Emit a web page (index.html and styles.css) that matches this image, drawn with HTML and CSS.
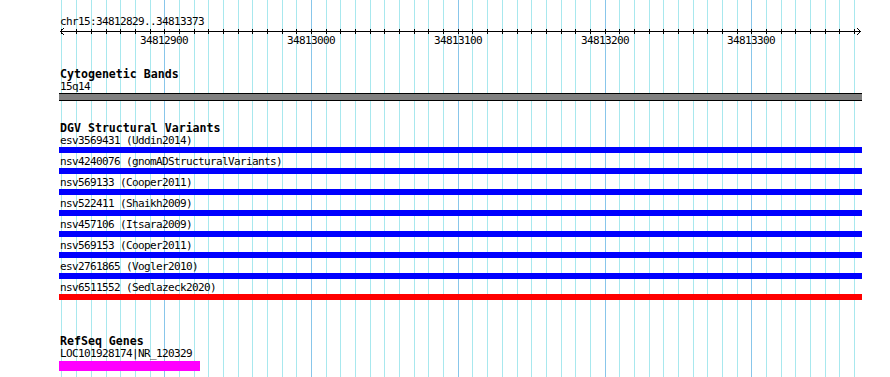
FILE: index.html
```html
<!DOCTYPE html>
<html lang="en">
<head>
<meta charset="utf-8">
<title>chr15:34812829..34813373</title>
<link rel="stylesheet" href="styles.css">
</head>
<body>
<div class="page">
  <svg class="grid" width="890" height="377" viewBox="0 0 890 377" aria-hidden="true">
    <path class="grid-minor" d="M61.5 0V377M76.5 0V377M91.5 0V377M106.5 0V377M120.5 0V377M135.5 0V377M150.5 0V377M179.5 0V377M194.5 0V377M208.5 0V377M223.5 0V377M238.5 0V377M252.5 0V377M267.5 0V377M282.5 0V377M296.5 0V377M326.5 0V377M340.5 0V377M355.5 0V377M370.5 0V377M384.5 0V377M399.5 0V377M414.5 0V377M428.5 0V377M443.5 0V377M472.5 0V377M487.5 0V377M502.5 0V377M517.5 0V377M531.5 0V377M546.5 0V377M561.5 0V377M575.5 0V377M590.5 0V377M619.5 0V377M634.5 0V377M649.5 0V377M663.5 0V377M678.5 0V377M693.5 0V377M707.5 0V377M722.5 0V377M737.5 0V377M766.5 0V377M781.5 0V377M795.5 0V377M810.5 0V377M825.5 0V377M839.5 0V377M854.5 0V377"/>
    <path class="grid-major" d="M164.5 0V377M311.5 0V377M458.5 0V377M605.5 0V377M751.5 0V377"/>
  </svg>
  <div class="content">
    <svg class="ruler" width="890" height="60" viewBox="0 0 890 60">
      <text class="ruler-label" x="60" y="25">chr15:34812829..34813373</text>
      <path class="axis" d="M60 31.5H860M64 28L60.5 31.5L64 35M857 28L860.5 31.5L857 35"/>
      <path class="axis" d="M61.5 29v5M76.5 29v5M91.5 29v5M106.5 29v5M120.5 29v5M135.5 29v5M150.5 29v5M164.5 29v5M179.5 29v5M194.5 29v5M208.5 29v5M223.5 29v5M238.5 29v5M252.5 29v5M267.5 29v5M282.5 29v5M296.5 29v5M311.5 29v5M326.5 29v5M340.5 29v5M355.5 29v5M370.5 29v5M384.5 29v5M399.5 29v5M414.5 29v5M428.5 29v5M443.5 29v5M458.5 29v5M472.5 29v5M487.5 29v5M502.5 29v5M517.5 29v5M531.5 29v5M546.5 29v5M561.5 29v5M575.5 29v5M590.5 29v5M605.5 29v5M619.5 29v5M634.5 29v5M649.5 29v5M663.5 29v5M678.5 29v5M693.5 29v5M707.5 29v5M722.5 29v5M737.5 29v5M751.5 29v5M766.5 29v5M781.5 29v5M795.5 29v5M810.5 29v5M825.5 29v5M839.5 29v5M854.5 29v5"/>
      <text class="ruler-num" x="164" y="44">34812900</text>
      <text class="ruler-num" x="311" y="44">34813000</text>
      <text class="ruler-num" x="458" y="44">34813100</text>
      <text class="ruler-num" x="605" y="44">34813200</text>
      <text class="ruler-num" x="751" y="44">34813300</text>
    </svg>

    <section class="track track-cyto">
      <h2 class="track-title">Cytogenetic Bands</h2>
      <div class="label label-tight">15q14</div>
      <div class="band"></div>
    </section>

    <section class="track track-dgv">
      <h2 class="track-title">DGV Structural Variants</h2>
      <div class="features">
        <div class="feature"><div class="label">esv3569431 (Uddin2014)</div><div class="bar bar-blue"></div></div>
        <div class="feature"><div class="label">nsv4240076 (gnomADStructuralVariants)</div><div class="bar bar-blue"></div></div>
        <div class="feature"><div class="label">nsv569133 (Cooper2011)</div><div class="bar bar-blue"></div></div>
        <div class="feature"><div class="label">nsv522411 (Shaikh2009)</div><div class="bar bar-blue"></div></div>
        <div class="feature"><div class="label">nsv457106 (Itsara2009)</div><div class="bar bar-blue"></div></div>
        <div class="feature"><div class="label">nsv569153 (Cooper2011)</div><div class="bar bar-blue"></div></div>
        <div class="feature"><div class="label">esv2761865 (Vogler2010)</div><div class="bar bar-blue"></div></div>
        <div class="feature"><div class="label">nsv6511552 (Sedlazeck2020)</div><div class="bar bar-red"></div></div>
      </div>
    </section>

    <section class="track track-refseq">
      <h2 class="track-title">RefSeq Genes</h2>
      <div class="label label-tight">LOC101928174|NR_120329</div>
      <div class="gene"></div>
    </section>
  </div>
</div>
</body>
</html>
```
FILE: styles.css
```css
html, body {
  margin: 0;
  padding: 0;
  background: #ffffff;
}

.page {
  position: relative;
  width: 890px;
  height: 377px;
  overflow: hidden;
  background: #ffffff;
}

.grid {
  position: absolute;
  left: 0;
  top: 0;
  z-index: 0;
}

.grid-minor {
  stroke: #a8e8ee;
  stroke-width: 1;
  fill: none;
  shape-rendering: crispEdges;
}

.grid-major {
  stroke: #88c6ea;
  stroke-width: 1;
  fill: none;
  shape-rendering: crispEdges;
}

.content {
  position: relative;
  z-index: 1;
  display: flex;
  flex-direction: column;
}

.ruler {
  display: block;
}

.axis {
  stroke: #000000;
  stroke-width: 1;
  fill: none;
  shape-rendering: crispEdges;
}

.ruler-label,
.ruler-num {
  font-family: "DejaVu Sans Mono", monospace;
  font-size: 11px;
  letter-spacing: -0.62px;
  fill: #000000;
}

.ruler-num {
  text-anchor: middle;
}

.track {
  display: flex;
  flex-direction: column;
  padding-left: 59px;
}

.track-cyto {
  margin-top: 8px;
}

.track-dgv {
  margin-top: 21px;
}

.track-refseq {
  margin-top: 35px;
}

.track-title {
  margin: 0 0 0 1px;
  font-family: "DejaVu Sans Mono", monospace;
  font-weight: bold;
  font-size: 11.6px;
  line-height: 12px;
  height: 12px;
  color: #000000;
  white-space: pre;
}

.label {
  margin-left: 1px;
  font-family: "DejaVu Sans Mono", monospace;
  font-size: 11px;
  letter-spacing: -0.62px;
  line-height: 11px;
  height: 11px;
  color: #000000;
  white-space: pre;
}

.label-tight {
  margin-top: 1px;
}

.band {
  margin-top: 1px;
  width: 803px;
  height: 6px;
  background: #808080;
  border-top: 1px solid #000000;
  border-bottom: 1px solid #000000;
}

.features {
  display: flex;
  flex-direction: column;
  gap: 3px;
  margin-top: 1px;
}

.feature {
  display: flex;
  flex-direction: column;
}

.bar {
  margin-top: 1px;
  width: 803px;
  height: 6px;
}

.bar-blue {
  background: #0000ff;
}

.bar-red {
  background: #ff0000;
}

.gene {
  margin-top: 2px;
  width: 141px;
  height: 10px;
  background: #ff00ff;
}
```
